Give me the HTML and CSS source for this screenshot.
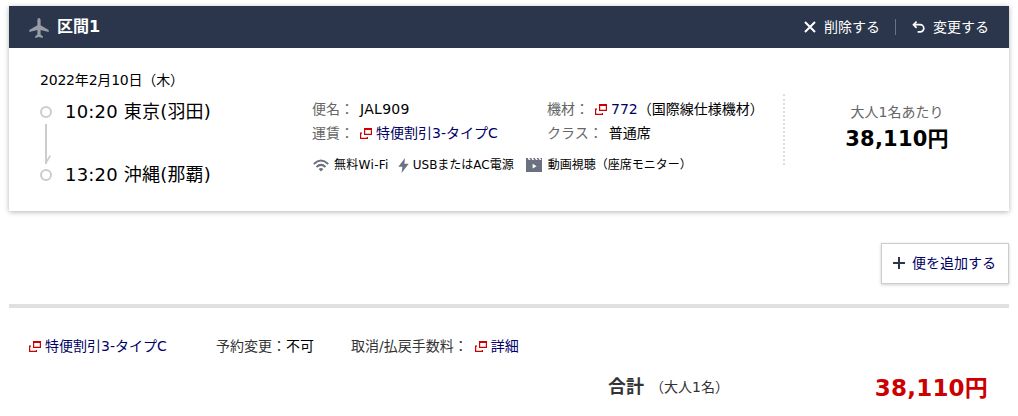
FILE: index.html
```
<!DOCTYPE html>
<html lang="ja">
<head>
  <meta charset="utf-8">
  <meta name="viewport" content="width=device-width">
  <title>区間1</title>
<link rel="stylesheet" href="styles.css">
</head>
<body>
    <svg class="defs" width="0" height="0">
        <symbol id="win" viewBox="0 0 12 11">
            <path d="M4.6 1H11.4V6.4H4.6Z" fill="none" stroke="#c00" stroke-width="1.2"/>
            <path d="M4 1H12" stroke="#c00" stroke-width="2"/>
            <path d="M2 5.1H.6V10.4H7.4V9" fill="none" stroke="#c00" stroke-width="1.2"/>
        </symbol>
    </svg>
    <section class="card">
        <header class="card-head">
            <svg class="plane" width="20" height="20" viewBox="0 0 20 20"><path d="M10 0C11.1 0 11.6 1 11.6 2.4V7.2L19.7 12V14.1L11.6 12V16.4L13.8 18.2V20L10 19L6.2 20V18.2L8.4 16.4V12L.3 14.1V12L8.4 7.2V2.4C8.4 1 8.9 0 10 0Z" fill="#979ca8"/></svg>
            <h2>区間1</h2>
            <a class="delete"><svg width="12" height="12" viewBox="0 0 12 12"><path d="M1 1L11 11M11 1L1 11" stroke="#fff" stroke-width="2"/></svg>削除する</a>
            <a class="change"><svg width="13" height="12" viewBox="0 0 13 12"><path d="M4.6.6L1.5 3.7L4.6 6.8M1.5 3.7H8.2A3.6 3.6 0 0 1 8.2 10.9H5.6" fill="none" stroke="#fff" stroke-width="1.7"/></svg>変更する</a>
        </header>
        <div class="card-body">
            <div class="trip">
                <p class="date">2022年2月10日（木）</p>
                <div class="route">
                    <svg width="12" height="75" viewBox="0 0 12 75">
                        <g fill="none" stroke="#ccc" stroke-width="2">
                            <circle cx="6" cy="6" r="5"/>
                            <circle cx="6" cy="69" r="5"/>
                            <path d="M6 18V58"/>
                            <path d="M6.2 56.6L10.3 49.5" stroke-width="1.6"/>
                        </g>
                    </svg>
                    <div class="stops">
                        <p>10:20 東京(羽田)</p>
                        <p>13:20 沖縄(那覇)</p>
                    </div>
                </div>
            </div>
            <div class="detail">
                <dl>
                    <div><dt>便名：</dt><dd class="flight">JAL909</dd></div>
                    <div><dt>機材：</dt><dd><svg class="win"><use href="#win"/></svg><a>772</a>（国際線仕様機材）</dd></div>
                    <div><dt>運賃：</dt><dd><svg class="win"><use href="#win"/></svg><a>特便割引3-タイプC</a></dd></div>
                    <div><dt>クラス：</dt><dd>普通席</dd></div>
                </dl>
                <ul class="service">
                    <li class="wifi"><svg width="16" height="13" viewBox="0 0 16 13"><g fill="none" stroke="#6b7180" stroke-width="2"><path d="M.8 4.9Q8-1.9 15.2 4.9"/><path d="M3.5 8Q8 3.8 12.5 8"/></g><path d="M5.6 9.9Q8 8 10.4 9.9L8 12.6Z" fill="#6b7180"/></svg>無料Wi-Fi</li>
                    <li class="power"><svg width="11" height="15" viewBox="0 0 11 15"><path d="M7 0L.3 8.8H4.4L3.6 15L10.7 5.8H6.4Z" fill="#6b7180"/></svg>USBまたはAC電源</li>
                    <li class="movie"><svg width="16" height="14" viewBox="0 0 16 14"><path d="M0 0H1.6L2.8 2H4.6L3.4 0H5.2L6.4 2H8.2L7 0H8.8L10 2H11.8L10.6 0H12.4L13.6 2H15.4L14.2 0H16V14H0Z" fill="#6b7180"/><path d="M6.6 5.8L10.6 8.2L6.6 10.6Z" fill="#fff"/></svg>動画視聴（座席モニター）</li>
                </ul>
            </div>
            <div class="fare">
                <p>大人1名あたり</p>
                <strong>38,110円</strong>
            </div>
        </div>
    </section>
    <div class="add">
        <a class="add-btn"><svg width="12" height="12" viewBox="0 0 12 12"><path d="M6 0V12M0 6H12" stroke="#2b354b" stroke-width="2"/></svg>便を追加する</a>
    </div>
    <footer class="summary">
        <div class="rules">
            <span class="rule-fare"><svg class="win"><use href="#win"/></svg><a>特便割引3-タイプC</a></span>
            <span class="rule-change">予約変更：<b>不可</b></span>
            <span>取消/払戻手数料：</span>
            <span class="rule-more"><svg class="win"><use href="#win"/></svg><a>詳細</a></span>
        </div>
        <div class="total">
            <h3>合計</h3>
            <span>（大人1名）</span>
            <strong>38,110円</strong>
        </div>
    </footer>
</body>
</html>
```
FILE: styles.css
```
*{font-family:'DejaVu Sans','Noto Sans CJK JP',sans-serif;box-sizing:border-box}
body {
    margin: 0;
    padding: 6px 9px 0;
    font-size: 14px;
    line-height: 24px;
    color: #000;
    background-color: #fff;
    overflow: hidden;
}
p, h2, h3, dl, dd, ul {
    margin: 0;
    padding: 0;
}
svg {
    display: block;
    flex-shrink: 0;
}
.defs {
    position: absolute;
}
a {
    color: #000066;
    white-space: nowrap;
}
.card {
    height: 205px;
    box-shadow: 0 1px 5px rgba(0, 0, 0, 0.3);
}
.card-head {
    height: 42px;
    padding: 0 20px 0 20px;
    background-color: #2b354b;
    display: flex;
    align-items: center;
}
.card-head h2 {
    color: #fff;
    font-size: 16px;
    margin: 0 auto 0 8px;
}
.plane {
    margin-top: 2px;
}
.card-head a {
    color: #fff;
    display: flex;
    align-items: center;
    height: 16px;
}
.delete svg {
    margin-right: 8px;
}
.change {
    margin-left: 15px;
    padding-left: 16px;
    border-left: 1px solid #6b7281;
}
.change svg {
    margin-right: 8px;
}
.card-body {
    display: flex;
    padding: 20px 0 0 31px;
}
.date {
    letter-spacing: -0.2px;
}
.trip {
    width: 272px;
}
.route {
    display: flex;
    gap: 13px;
    padding-top: 14px;
}
.stops {
    display: flex;
    flex-direction: column;
    justify-content: space-between;
    height: 75px;
    font-size: 18px;
    line-height: 12px;
    letter-spacing: 0.2px;
    white-space: nowrap;
}
.detail {
    width: 471px;
    padding-top: 29px;
}
.detail dl {
    display: grid;
    grid-template-columns: 235px 1fr;
    white-space: nowrap;
}
.detail dl div, .detail dd {
    display: flex;
    align-items: center;
}
.detail dt {
    color: #666;
    margin-right: 6px;
}
.flight {
    letter-spacing: 0.3px;
}
.win {
    width: 12px;
    height: 11px;
    margin-right: 4px;
}
.service {
    display: flex;
    list-style: none;
    font-size: 12px;
    white-space: nowrap;
    padding-top: 8px;
}
.service li {
    display: flex;
    align-items: center;
}
.wifi {
    letter-spacing: 0.3px;
}
.wifi svg {
    margin: 0 5px 0 1px;
}
.power {
    margin-left: 9px;
}
.power svg {
    margin-right: 4px;
}
.movie {
    margin-left: 12px;
}
.movie svg {
    margin-right: 6px;
}
.fare {
    width: 226px;
    height: 71px;
    margin-top: 26px;
    padding-top: 6px;
    border-left: 2px dotted #ddd;
    text-align: center;
}
.fare p {
    color: #666;
}
.fare strong {
    display: block;
    font-size: 21px;
    line-height: 30px;
    letter-spacing: 0.2px;
}
.add {
    display: flex;
    justify-content: flex-end;
    padding: 32px 0 20px;
}
.add-btn {
    display: flex;
    align-items: center;
    width: 128px;
    height: 41px;
    padding: 0 0 2px 11px;
    border: 1px solid #ccc;
    box-shadow: 0 1px 3px rgba(0, 0, 0, 0.2);
}
.add-btn svg {
    margin-right: 7px;
}
.summary {
    border-top: 4px solid #e0e0e0;
    color: #333;
    white-space: nowrap;
}
.rules {
    display: flex;
    padding: 26px 0 0 20px;
}
.rules b {
    color: #000;
    font-weight: normal;
}
.rule-fare, .rule-more {
    display: flex;
    align-items: center;
}
.rule-fare {
    width: 187px;
}
.rule-change {
    width: 135px;
}
.rule-more {
    margin-left: 7px;
}
.total {
    display: flex;
    align-items: center;
    height: 36px;
    padding: 0 21px 0 599px;
    margin-top: 11px;
}
.total h3 {
    font-size: 18px;
    margin-right: 6px;
}
.total strong {
    color: #c00;
    font-size: 23px;
    letter-spacing: 0.2px;
    margin: 2px 0 0 auto;
}
```
